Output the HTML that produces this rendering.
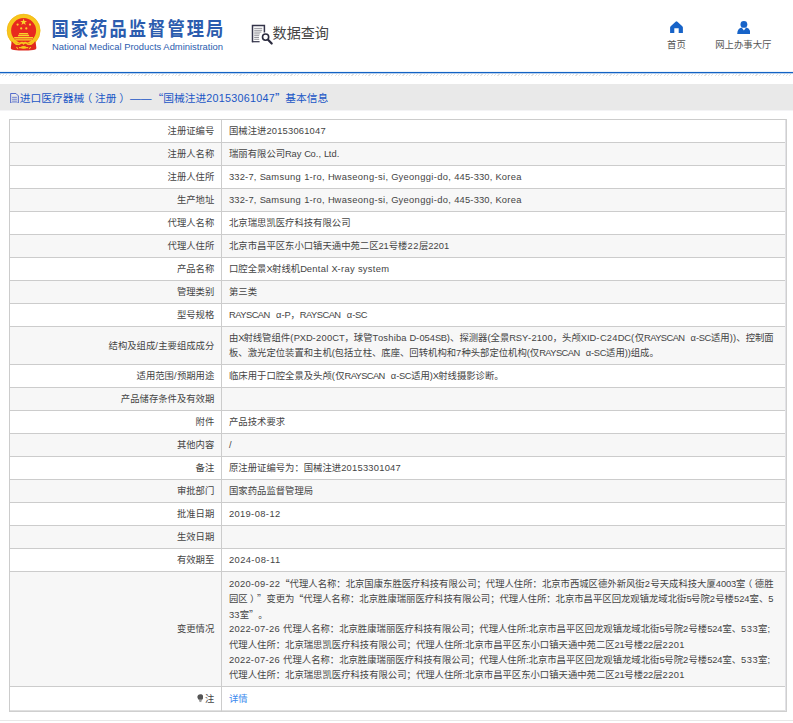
<!DOCTYPE html>
<html lang="zh-CN">
<head>
<meta charset="utf-8">
<title>国家药品监督管理局 数据查询</title>
<style>
html,body{margin:0;padding:0;background:#fff;}
body{width:793px;height:723px;position:relative;overflow:hidden;
  font-family:"Liberation Sans","Noto Sans CJK SC",sans-serif;font-size:9.35px;color:#444;}
.abs{position:absolute;white-space:pre;}
#emblem{position:absolute;left:0;top:5px;width:50px;height:50px;}
#t1{left:51.4px;top:15.6px;font-size:17.3px;letter-spacing:2.05px;line-height:26px;font-weight:bold;color:#2b5cae;transform:scaleY(1.11);transform-origin:0 50%;}
#t2{left:52px;top:41.3px;font-size:9.42px;line-height:12px;color:#2b5cae;}
#qicon{position:absolute;left:250px;top:22px;width:26px;height:26px;}
#qtext{left:272.6px;top:23.2px;font-size:14.1px;line-height:20px;color:#444;}
#home{position:absolute;left:670px;top:20.6px;width:13px;height:12.4px;}
#hometxt{left:667px;top:39.3px;font-size:9.4px;line-height:12px;color:#555;}
#user{position:absolute;left:736.6px;top:20.5px;width:13.8px;height:13px;}
#usertxt{left:715.2px;top:39.3px;font-size:9.4px;line-height:12px;color:#555;}
#bline{position:absolute;left:0;top:71px;width:793px;height:3px;background:linear-gradient(to bottom,rgba(18,98,196,.08) 0,rgba(18,98,196,.08) 1px,#1262c4 1px,#1262c4 2px,rgba(18,98,196,.3) 2px,rgba(18,98,196,.3) 3px);}
#hatch{position:absolute;left:0;top:73.6px;width:793px;height:2.6px;
  background:repeating-linear-gradient(135deg,#e2e2e2 0,#e2e2e2 0.8px,#fff 0.8px,#fff 2.4px);}
#bar{position:absolute;left:0;top:84px;width:793px;height:26px;background:#e9e9e9;border-bottom:1px solid #f4f4f6;}
#bartxt{left:19.7px;top:90px;font-size:10.75px;line-height:16px;color:#1a56c6;}
#baricon{position:absolute;left:10px;top:92.6px;width:9px;height:10.6px;}
#tbl{position:absolute;left:0;top:0;width:793px;height:723px;}
.rw{position:absolute;left:9px;width:777px;}
.hl{position:absolute;left:9px;width:778px;height:1px;background:#ccc;}
.vl{position:absolute;width:1px;background:#ccc;}
.t{position:absolute;white-space:pre;line-height:15.4px;height:15.4px;font-size:9.35px;color:#444;}
.q{display:inline-block;}
.qq{width:1em;font-family:"Noto Sans CJK SC",sans-serif;}
.fp{display:inline-block;width:1em;text-align:center;font-feature-settings:"halt";}
.bulb{display:inline-block;width:6.8px;height:8.4px;vertical-align:-1px;margin-right:1.5px;}
a{color:#3a88ee;text-decoration:none;}
#fline{position:absolute;left:0;top:720px;width:793px;height:1px;background:#e8e8e8;}
</style>
</head>
<body>
<svg id="emblem" viewBox="0 5 50 50">
  <circle cx="23.6" cy="30.6" r="14.6" fill="#e8291f" stroke="#f7c61d" stroke-width="4.2"/>
  <circle cx="23.6" cy="30.6" r="16.4" fill="none" stroke="#f4b81c" stroke-width="0.7"/>
  <polygon points="23.6,18.6 24.5,21 27,21 25,22.6 25.8,25.1 23.6,23.6 21.4,25.1 22.2,22.6 20.2,21 22.7,21" fill="#f9d32c"/>
  <circle cx="17.6" cy="24.6" r="1.1" fill="#f9d32c"/>
  <circle cx="30" cy="24.6" r="1.1" fill="#f9d32c"/>
  <circle cx="21.2" cy="28.4" r="1.1" fill="#f9d32c"/>
  <circle cx="26.3" cy="28.4" r="1.1" fill="#f9d32c"/>
  <path d="M19.4 33 H27.8 L28.4 34.2 H18.8 Z M18.4 34.8 H28.8 L29.4 36.2 H17.8 Z M14.2 37 H33 V38.6 H14.2 Z M15.2 39.2 H32 V40.4 H15.2 Z" fill="#f9d32c"/>
  <path d="M11.6 41.4 Q17 43.6 23.6 43.6 Q30.2 43.6 35.6 41.4 L36.4 48.2 Q36.2 49.6 33.2 50 Q23.6 51.2 14 50 Q11 49.6 10.8 48.2 Z" fill="#e02a1e"/>
  <path d="M13.4 41.8 Q16.4 45 19.6 44 Q22 41.6 23.6 43.6 Q25.2 41.6 27.6 44 Q30.8 45 33.8 41.8" fill="none" stroke="#f7c61d" stroke-width="1.7"/>
  <ellipse cx="23.6" cy="47.4" rx="2.7" ry="1.3" fill="#f7c61d"/>
  <path d="M16.4 47 L18 48.8 M30.8 47 L29.2 48.8 M19 47.6 H28.2" stroke="#f7c61d" stroke-width="1.1"/>
</svg>
<div class="abs" id="t1">国家药品监督管理局</div>
<div class="abs" id="t2">National Medical Products Administration</div>

<svg id="qicon" viewBox="250 22 26 26">
  <path d="M252.5 42.2 V25.6 H264.4 V32.6" fill="none" stroke="#34344a" stroke-width="1.5"/>
  <path d="M251.9 41.7 H259.6" fill="none" stroke="#34344a" stroke-width="1.2"/>
  <path d="M254.2 28.4 H262.2 M254.2 30.3 H262.2 M254.2 32.1 H261.4 M254.2 33.9 H259.8 M254.2 35.7 H259.2 M254.2 37.5 H259 M254.2 39.3 H259.2" fill="none" stroke="#8a8a92" stroke-width="0.9"/>
  <circle cx="265.6" cy="37.1" r="3.1" fill="#fff" stroke="#2a2a3e" stroke-width="1.6"/>
  <path d="M268.3 39.9 L271.7 43.5" stroke="#2a2a3e" stroke-width="2.2" stroke-linecap="round"/>
</svg>
<div class="abs" id="qtext">数据查询</div>

<svg id="home" viewBox="0 0 13 12.4" preserveAspectRatio="none">
  <path d="M6.5 0.2 Q6.9 0.2 7.4 0.7 L12.3 5.2 Q12.9 5.8 12.9 6.6 V12.4 H8.7 V7.2 H4.3 V12.4 H0.1 V6.6 Q0.1 5.8 0.7 5.2 L5.6 0.7 Q6.1 0.2 6.5 0.2 Z" fill="#1763c8"/>
</svg>
<div class="abs" id="hometxt">首页</div>
<svg id="user" viewBox="0 0 13.8 13" preserveAspectRatio="none">
  <circle cx="6.9" cy="3.4" r="3.4" fill="#1763c8"/>
  <path d="M0.2 12.9 Q0.5 7.4 4.6 6.6 L6.9 9.6 L9.2 6.6 Q13.3 7.4 13.6 12.9 Z" fill="#1763c8"/>
</svg>
<div class="abs" id="usertxt">网上办事大厅</div>

<div id="bline"></div>
<div id="hatch"></div>
<div id="bar"></div>
<svg id="baricon" viewBox="0 0 9 11">
  <path d="M0.5 0.5 H6 L8.5 3 V10.5 H0.5 Z" fill="none" stroke="#4a63c8" stroke-width="1"/>
  <path d="M2 4.5 H7 M2 6.5 H7 M2 8.5 H7" stroke="#4a63c8" stroke-width="0.8"/>
</svg>
<div class="abs" id="bartxt"><span class="c">进口医疗器械<span class="fp">（</span>注册<span class="fp">）</span></span><span class="e"><span style="letter-spacing:-0.113px"> </span></span><span class="c">——</span><span class="e"><span style="letter-spacing:1.356px"> </span></span><span class="q qq" style="margin-left:-3.51px;text-align:right">“</span><span class="c">国械注进</span><span class="e"><span style="letter-spacing:0.283px">20153061047</span></span><span class="q qq" style="margin-right:-3.51px;text-align:left">”</span><span class="e"><span style="letter-spacing:-0.038px"> </span></span><span class="c">基本信息</span></div>

<div id="tbl">
<div class="rw" style="top:119.00px;height:23.00px;background:#fff"></div>
<div class="rw" style="top:142.00px;height:23.00px;background:#f7f7f7"></div>
<div class="rw" style="top:165.00px;height:23.00px;background:#fff"></div>
<div class="rw" style="top:188.00px;height:23.00px;background:#f7f7f7"></div>
<div class="rw" style="top:211.00px;height:23.00px;background:#fff"></div>
<div class="rw" style="top:234.00px;height:23.00px;background:#f7f7f7"></div>
<div class="rw" style="top:257.00px;height:23.00px;background:#fff"></div>
<div class="rw" style="top:280.00px;height:23.00px;background:#f7f7f7"></div>
<div class="rw" style="top:303.00px;height:23.00px;background:#fff"></div>
<div class="rw" style="top:326.00px;height:38.00px;background:#f7f7f7"></div>
<div class="rw" style="top:364.00px;height:23.00px;background:#fff"></div>
<div class="rw" style="top:387.00px;height:23.00px;background:#f7f7f7"></div>
<div class="rw" style="top:410.00px;height:23.00px;background:#fff"></div>
<div class="rw" style="top:433.00px;height:23.00px;background:#f7f7f7"></div>
<div class="rw" style="top:456.00px;height:23.00px;background:#fff"></div>
<div class="rw" style="top:479.00px;height:23.00px;background:#f7f7f7"></div>
<div class="rw" style="top:502.00px;height:23.00px;background:#fff"></div>
<div class="rw" style="top:525.00px;height:23.00px;background:#f7f7f7"></div>
<div class="rw" style="top:548.00px;height:23.00px;background:#fff"></div>
<div class="rw" style="top:571.00px;height:115.00px;background:#f7f7f7"></div>
<div class="rw" style="top:686.00px;height:25.00px;background:#fff"></div>
<div class="hl" style="top:119.00px"></div>
<div class="hl" style="top:142.00px"></div>
<div class="hl" style="top:165.00px"></div>
<div class="hl" style="top:188.00px"></div>
<div class="hl" style="top:211.00px"></div>
<div class="hl" style="top:234.00px"></div>
<div class="hl" style="top:257.00px"></div>
<div class="hl" style="top:280.00px"></div>
<div class="hl" style="top:303.00px"></div>
<div class="hl" style="top:326.00px"></div>
<div class="hl" style="top:364.00px"></div>
<div class="hl" style="top:387.00px"></div>
<div class="hl" style="top:410.00px"></div>
<div class="hl" style="top:433.00px"></div>
<div class="hl" style="top:456.00px"></div>
<div class="hl" style="top:479.00px"></div>
<div class="hl" style="top:502.00px"></div>
<div class="hl" style="top:525.00px"></div>
<div class="hl" style="top:548.00px"></div>
<div class="hl" style="top:571.00px"></div>
<div class="hl" style="top:686.00px"></div>
<div class="hl" style="top:710.00px;background:#e0e0e0"></div>
<div class="hl" style="top:711.00px;background:#cfcfcf"></div>
<div class="vl" style="left:9.00px;top:119.00px;height:593.00px"></div>
<div class="vl" style="left:221.00px;top:119.00px;height:593.00px"></div>
<div class="vl" style="left:785.00px;top:120.00px;height:591.00px;background:#e2e2e6"></div>
<div class="vl" style="left:786.00px;top:119.00px;height:593.00px;background:#cfcfcf"></div>
<div class="t lb" id="l0" style="right:578.70px;top:124.20px"><span class="c">注册证编号</span></div>
<div class="t v" id="v0_0" style="left:229.00px;top:124.20px"><span class="c">国械注进</span><span class="e"><span style="letter-spacing:0.204px">20153061047</span></span></div>
<div class="t lb" id="l1" style="right:578.70px;top:147.20px"><span class="c">注册人名称</span></div>
<div class="t v" id="v1_0" style="left:229.00px;top:147.20px"><span class="c">瑞丽有限公司</span><span class="e"><span style="letter-spacing:-0.439px">R</span><span style="letter-spacing:0.101px">ay</span><span style="letter-spacing:0.121px"> </span><span style="letter-spacing:-0.439px">C</span><span style="letter-spacing:0.101px">o</span><span style="letter-spacing:0.101px">.,</span><span style="letter-spacing:0.121px"> </span><span style="letter-spacing:-0.439px">L</span><span style="letter-spacing:0.101px">td</span><span style="letter-spacing:0.101px">.</span></span></div>
<div class="t lb" id="l2" style="right:578.70px;top:170.20px"><span class="c">注册人住所</span></div>
<div class="t v" id="v2_0" style="left:229.00px;top:170.20px"><span class="e"><span style="letter-spacing:0.118px">332</span><span style="letter-spacing:0.358px">-</span><span style="letter-spacing:0.118px">7</span><span style="letter-spacing:0.358px">,</span><span style="letter-spacing:0.378px"> </span><span style="letter-spacing:-0.182px">S</span><span style="letter-spacing:0.358px">amsung</span><span style="letter-spacing:0.378px"> </span><span style="letter-spacing:0.118px">1</span><span style="letter-spacing:0.358px">-</span><span style="letter-spacing:0.358px">ro</span><span style="letter-spacing:0.358px">,</span><span style="letter-spacing:0.378px"> </span><span style="letter-spacing:-0.182px">H</span><span style="letter-spacing:0.358px">waseong</span><span style="letter-spacing:0.358px">-</span><span style="letter-spacing:0.358px">si</span><span style="letter-spacing:0.358px">,</span><span style="letter-spacing:0.378px"> </span><span style="letter-spacing:-0.182px">G</span><span style="letter-spacing:0.358px">yeonggi</span><span style="letter-spacing:0.358px">-</span><span style="letter-spacing:0.358px">do</span><span style="letter-spacing:0.358px">,</span><span style="letter-spacing:0.378px"> </span><span style="letter-spacing:0.118px">445</span><span style="letter-spacing:0.358px">-</span><span style="letter-spacing:0.118px">330</span><span style="letter-spacing:0.358px">,</span><span style="letter-spacing:0.378px"> </span><span style="letter-spacing:-0.182px">K</span><span style="letter-spacing:0.358px">orea</span></span></div>
<div class="t lb" id="l3" style="right:578.70px;top:193.20px"><span class="c">生产地址</span></div>
<div class="t v" id="v3_0" style="left:229.00px;top:193.20px"><span class="e"><span style="letter-spacing:0.118px">332</span><span style="letter-spacing:0.358px">-</span><span style="letter-spacing:0.118px">7</span><span style="letter-spacing:0.358px">,</span><span style="letter-spacing:0.378px"> </span><span style="letter-spacing:-0.182px">S</span><span style="letter-spacing:0.358px">amsung</span><span style="letter-spacing:0.378px"> </span><span style="letter-spacing:0.118px">1</span><span style="letter-spacing:0.358px">-</span><span style="letter-spacing:0.358px">ro</span><span style="letter-spacing:0.358px">,</span><span style="letter-spacing:0.378px"> </span><span style="letter-spacing:-0.182px">H</span><span style="letter-spacing:0.358px">waseong</span><span style="letter-spacing:0.358px">-</span><span style="letter-spacing:0.358px">si</span><span style="letter-spacing:0.358px">,</span><span style="letter-spacing:0.378px"> </span><span style="letter-spacing:-0.182px">G</span><span style="letter-spacing:0.358px">yeonggi</span><span style="letter-spacing:0.358px">-</span><span style="letter-spacing:0.358px">do</span><span style="letter-spacing:0.358px">,</span><span style="letter-spacing:0.378px"> </span><span style="letter-spacing:0.118px">445</span><span style="letter-spacing:0.358px">-</span><span style="letter-spacing:0.118px">330</span><span style="letter-spacing:0.358px">,</span><span style="letter-spacing:0.378px"> </span><span style="letter-spacing:-0.182px">K</span><span style="letter-spacing:0.358px">orea</span></span></div>
<div class="t lb" id="l4" style="right:578.70px;top:216.20px"><span class="c">代理人名称</span></div>
<div class="t v" id="v4_0" style="left:229.00px;top:216.20px"><span class="c">北京瑞思凯医疗科技有限公司</span></div>
<div class="t lb" id="l5" style="right:578.70px;top:239.20px"><span class="c">代理人住所</span></div>
<div class="t v" id="v5_0" style="left:229.00px;top:239.20px"><span class="c">北京市昌平区东小口镇天通中苑二区</span><span class="e"><span style="letter-spacing:-0.110px">21</span></span><span class="c">号楼</span><span class="e"><span style="letter-spacing:0.547px">22</span></span><span class="c">层</span><span class="e"><span style="letter-spacing:0.085px">2201</span></span></div>
<div class="t lb" id="l6" style="right:578.70px;top:262.20px"><span class="c">产品名称</span></div>
<div class="t v" id="v6_0" style="left:229.00px;top:262.20px"><span class="c">口腔全景</span><span class="e"><span style="letter-spacing:-0.527px">X</span></span><span class="c">射线机</span><span class="e"><span style="letter-spacing:-0.218px">D</span><span style="letter-spacing:0.322px">ental</span><span style="letter-spacing:0.342px"> </span><span style="letter-spacing:-0.218px">X</span><span style="letter-spacing:0.322px">-</span><span style="letter-spacing:0.322px">ray</span><span style="letter-spacing:0.342px"> </span><span style="letter-spacing:0.322px">system</span></span></div>
<div class="t lb" id="l7" style="right:578.70px;top:285.20px"><span class="c">管理类别</span></div>
<div class="t v" id="v7_0" style="left:229.00px;top:285.20px"><span class="c">第三类</span></div>
<div class="t lb" id="l8" style="right:578.70px;top:308.20px"><span class="c">型号规格</span></div>
<div class="t v" id="v8_0" style="left:229.00px;top:308.20px"><span class="e"><span style="letter-spacing:-0.528px">RAYSCAN</span><span style="letter-spacing:0.412px"> </span><span class="q" style="width:8.63px;text-align:right">α</span><span style="letter-spacing:-0.168px">-P</span></span><span class="c">，</span><span class="e"><span style="letter-spacing:-0.536px">RAYSCAN</span><span style="letter-spacing:0.404px"> </span><span class="q" style="width:8.62px;text-align:right">α</span><span style="letter-spacing:-0.326px">-SC</span></span></div>
<div class="t lb" id="l9" style="right:578.70px;top:338.70px"><span class="c">结构及组成</span><span class="e"><span style="letter-spacing:0.360px">/</span></span><span class="c">主要组成成分</span></div>
<div class="t v" id="v9_0" style="left:229.00px;top:331.00px"><span class="c">由</span><span class="e"><span style="letter-spacing:-1.192px">X</span></span><span class="c">射线管组件</span><span class="e"><span style="letter-spacing:0.427px">(</span><span style="letter-spacing:-0.113px">PXD</span><span style="letter-spacing:0.427px">-</span><span style="letter-spacing:0.187px">200</span><span style="letter-spacing:-0.113px">CT</span></span><span class="c">，球管</span><span class="e"><span style="letter-spacing:-0.325px">T</span><span style="letter-spacing:0.215px">oshiba</span><span style="letter-spacing:0.235px"> </span><span style="letter-spacing:-0.325px">D</span><span style="letter-spacing:0.215px">-</span><span style="letter-spacing:-0.025px">054</span><span style="letter-spacing:-0.325px">SB</span><span style="letter-spacing:0.215px">)</span></span><span class="c">、探测器</span><span class="e"><span style="letter-spacing:0.038px">(</span></span><span class="c">全景</span><span class="e"><span style="letter-spacing:-0.178px">RSY</span><span style="letter-spacing:0.362px">-</span><span style="letter-spacing:0.122px">2100</span></span><span class="c">，头颅</span><span class="e"><span style="letter-spacing:-0.026px">XID</span><span style="letter-spacing:0.514px">-</span><span style="letter-spacing:-0.026px">C</span><span style="letter-spacing:0.274px">24</span><span style="letter-spacing:-0.026px">DC</span><span style="letter-spacing:0.514px">(</span></span><span class="c">仅</span><span class="e"><span style="letter-spacing:-0.589px">RAYSCAN</span><span style="letter-spacing:0.351px"> </span><span class="q" style="width:8.57px;text-align:right">α</span><span style="letter-spacing:-0.379px">-SC</span></span><span class="c">适用</span><span class="e"><span style="letter-spacing:0.210px">))</span></span><span class="c">、控制面</span></div>
<div class="t v" id="v9_1" style="left:229.00px;top:346.40px"><span class="c">板、激光定位装置和主机</span><span class="e"><span style="letter-spacing:-0.315px">(</span></span><span class="c">包括立柱、底座、回转机构和</span><span class="e"><span style="letter-spacing:0.111px">7</span></span><span class="c">种头部定位机构</span><span class="e"><span style="letter-spacing:-0.137px">(</span></span><span class="c">仅</span><span class="e"><span style="letter-spacing:-0.582px">RAYSCAN</span><span style="letter-spacing:0.358px"> </span><span class="q" style="width:8.58px;text-align:right">α</span><span style="letter-spacing:-0.372px">-SC</span></span><span class="c">适用</span><span class="e"><span style="letter-spacing:-0.165px">))</span></span><span class="c">组成。</span></div>
<div class="t lb" id="l10" style="right:578.70px;top:369.20px"><span class="c">适用范围</span><span class="e"><span style="letter-spacing:0.360px">/</span></span><span class="c">预期用途</span></div>
<div class="t v" id="v10_0" style="left:229.00px;top:369.20px"><span class="c">临床用于口腔全景及头颅</span><span class="e"><span style="letter-spacing:0.291px">(</span></span><span class="c">仅</span><span class="e"><span style="letter-spacing:-0.614px">RAYSCAN</span><span style="letter-spacing:0.326px"> </span><span class="q" style="width:8.55px;text-align:right">α</span><span style="letter-spacing:-0.404px">-SC</span></span><span class="c">适用</span><span class="e"><span style="letter-spacing:-0.212px">)</span><span style="letter-spacing:-0.752px">X</span></span><span class="c">射线摄影诊断。</span></div>
<div class="t lb" id="l11" style="right:578.70px;top:392.20px"><span class="c">产品储存条件及有效期</span></div>
<div class="t lb" id="l12" style="right:578.70px;top:415.20px"><span class="c">附件</span></div>
<div class="t v" id="v12_0" style="left:229.00px;top:415.20px"><span class="c">产品技术要求</span></div>
<div class="t lb" id="l13" style="right:578.70px;top:438.20px"><span class="c">其他内容</span></div>
<div class="t v" id="v13_0" style="left:229.00px;top:438.20px"><span class="e"><span style="letter-spacing:0.360px">/</span></span></div>
<div class="t lb" id="l14" style="right:578.70px;top:461.20px"><span class="c">备注</span></div>
<div class="t v" id="v14_0" style="left:229.00px;top:461.20px"><span class="c">原注册证编号为：国械注进</span><span class="e"><span style="letter-spacing:0.245px">20153301047</span></span></div>
<div class="t lb" id="l15" style="right:578.70px;top:484.20px"><span class="c">审批部门</span></div>
<div class="t v" id="v15_0" style="left:229.00px;top:484.20px"><span class="c">国家药品监督管理局</span></div>
<div class="t lb" id="l16" style="right:578.70px;top:507.20px"><span class="c">批准日期</span></div>
<div class="t v" id="v16_0" style="left:229.00px;top:507.20px"><span class="e"><span style="letter-spacing:0.322px">2019</span><span style="letter-spacing:0.562px">-</span><span style="letter-spacing:0.322px">08</span><span style="letter-spacing:0.562px">-</span><span style="letter-spacing:0.322px">12</span></span></div>
<div class="t lb" id="l17" style="right:578.70px;top:530.20px"><span class="c">生效日期</span></div>
<div class="t lb" id="l18" style="right:578.70px;top:553.20px"><span class="c">有效期至</span></div>
<div class="t v" id="v18_0" style="left:229.00px;top:553.20px"><span class="e"><span style="letter-spacing:0.386px">2024</span><span style="letter-spacing:0.626px">-</span><span style="letter-spacing:0.386px">08</span><span style="letter-spacing:0.626px">-</span><span style="letter-spacing:0.386px">11</span></span></div>
<div class="t lb" id="l19" style="right:578.70px;top:622.20px"><span class="c">变更情况</span></div>
<div class="t v" id="v19_0" style="left:229.00px;top:576.00px"><span class="e"><span style="letter-spacing:0.284px">2020</span><span style="letter-spacing:0.524px">-</span><span style="letter-spacing:0.284px">09</span><span style="letter-spacing:0.524px">-</span><span style="letter-spacing:0.284px">22</span><span style="letter-spacing:0.544px"> </span></span><span class="q qq" style="margin-left:-3.05px;text-align:right">“</span><span class="c">代理人名称：北京国康东胜医疗科技有限公司；代理人住所：北京市西城区德外新风街</span><span class="e"><span style="letter-spacing:0.517px">2</span></span><span class="c">号天成科技大厦</span><span class="e"><span style="letter-spacing:-0.128px">4003</span></span><span class="c">室<span class="fp">（</span>德胜</span></div>
<div class="t v" id="v19_1" style="left:229.00px;top:591.40px"><span class="c">园区<span class="fp">）</span></span><span class="q qq" style="margin-right:-3.05px;text-align:left">”</span><span class="e"><span style="letter-spacing:0.446px"> </span></span><span class="c">变更为</span><span class="e"><span style="letter-spacing:-0.054px"> </span></span><span class="q qq" style="margin-left:-3.05px;text-align:right">“</span><span class="c">代理人名称：北京胜康瑞丽医疗科技有限公司；代理人住所：北京市昌平区回龙观镇龙域北街</span><span class="e"><span style="letter-spacing:-0.514px">5</span></span><span class="c">号院</span><span class="e"><span style="letter-spacing:0.286px">2</span></span><span class="c">号楼</span><span class="e"><span style="letter-spacing:0.002px">524</span></span><span class="c">室、</span><span class="e"><span style="letter-spacing:0.786px">5</span></span></div>
<div class="t v" id="v19_2" style="left:229.00px;top:606.80px"><span class="e"><span style="letter-spacing:0.120px">33</span></span><span class="c">室</span><span class="q qq" style="margin-right:-3.05px;text-align:left">”</span><span class="e"><span style="letter-spacing:0.380px"> </span></span><span class="c">。</span></div>
<div class="t v" id="v19_3" style="left:229.00px;top:622.20px"><span class="e"><span style="letter-spacing:0.267px">2022</span><span style="letter-spacing:0.507px">-</span><span style="letter-spacing:0.267px">07</span><span style="letter-spacing:0.507px">-</span><span style="letter-spacing:0.267px">26</span><span style="letter-spacing:0.527px"> </span></span><span class="c">代理人名称：北京胜康瑞丽医疗科技有限公司；代理人住所</span><span class="e"><span style="letter-spacing:-0.081px">:</span></span><span class="c">北京市昌平区回龙观镇龙域北街</span><span class="e"><span style="letter-spacing:-0.321px">5</span></span><span class="c">号院</span><span class="e"><span style="letter-spacing:0.286px">2</span></span><span class="c">号楼</span><span class="e"><span style="letter-spacing:-0.134px">524</span></span><span class="c">室、</span><span class="e"><span style="letter-spacing:0.467px">533</span></span><span class="c">室</span><span class="e"><span style="letter-spacing:-0.468px">;</span></span></div>
<div class="t v" id="v19_4" style="left:229.00px;top:637.60px"><span class="c">代理人住所：北京瑞思凯医疗科技有限公司；代理人住所</span><span class="e"><span style="letter-spacing:-0.112px">:</span></span><span class="c">北京市昌平区东小口镇天通中苑二区</span><span class="e"><span style="letter-spacing:-0.352px">21</span></span><span class="c">号楼</span><span class="e"><span style="letter-spacing:-0.105px">22</span></span><span class="c">层</span><span class="e"><span style="letter-spacing:0.388px">2201</span></span></div>
<div class="t v" id="v19_5" style="left:229.00px;top:653.00px"><span class="e"><span style="letter-spacing:0.267px">2022</span><span style="letter-spacing:0.507px">-</span><span style="letter-spacing:0.267px">07</span><span style="letter-spacing:0.507px">-</span><span style="letter-spacing:0.267px">26</span><span style="letter-spacing:0.527px"> </span></span><span class="c">代理人名称：北京胜康瑞丽医疗科技有限公司；代理人住所</span><span class="e"><span style="letter-spacing:-0.081px">:</span></span><span class="c">北京市昌平区回龙观镇龙域北街</span><span class="e"><span style="letter-spacing:-0.321px">5</span></span><span class="c">号院</span><span class="e"><span style="letter-spacing:0.286px">2</span></span><span class="c">号楼</span><span class="e"><span style="letter-spacing:-0.134px">524</span></span><span class="c">室、</span><span class="e"><span style="letter-spacing:0.467px">533</span></span><span class="c">室</span><span class="e"><span style="letter-spacing:-0.468px">;</span></span></div>
<div class="t v" id="v19_6" style="left:229.00px;top:668.40px"><span class="c">代理人住所：北京瑞思凯医疗科技有限公司；代理人住所</span><span class="e"><span style="letter-spacing:-0.112px">:</span></span><span class="c">北京市昌平区东小口镇天通中苑二区</span><span class="e"><span style="letter-spacing:-0.352px">21</span></span><span class="c">号楼</span><span class="e"><span style="letter-spacing:-0.105px">22</span></span><span class="c">层</span><span class="e"><span style="letter-spacing:0.388px">2201</span></span></div>
<div class="t lb" id="l20" style="right:578.70px;top:691.60px"><svg class="bulb" viewBox="0 0 8 10"><path d="M4 0.4 C6.2 0.4 7.6 1.9 7.6 3.7 C7.6 5.2 6.6 6 6 7 L2 7 C1.4 6 0.4 5.2 0.4 3.7 C0.4 1.9 1.8 0.4 4 0.4 Z" fill="#555"/><path d="M2.4 7.8 H5.6 M2.8 9 H5.2" stroke="#666" stroke-width="0.8"/></svg>注</div>
<div class="t v" id="v20_0" style="left:229.00px;top:691.60px"><a>详情</a></div>
</div>
<div id="fline"></div>
</body>
</html>
